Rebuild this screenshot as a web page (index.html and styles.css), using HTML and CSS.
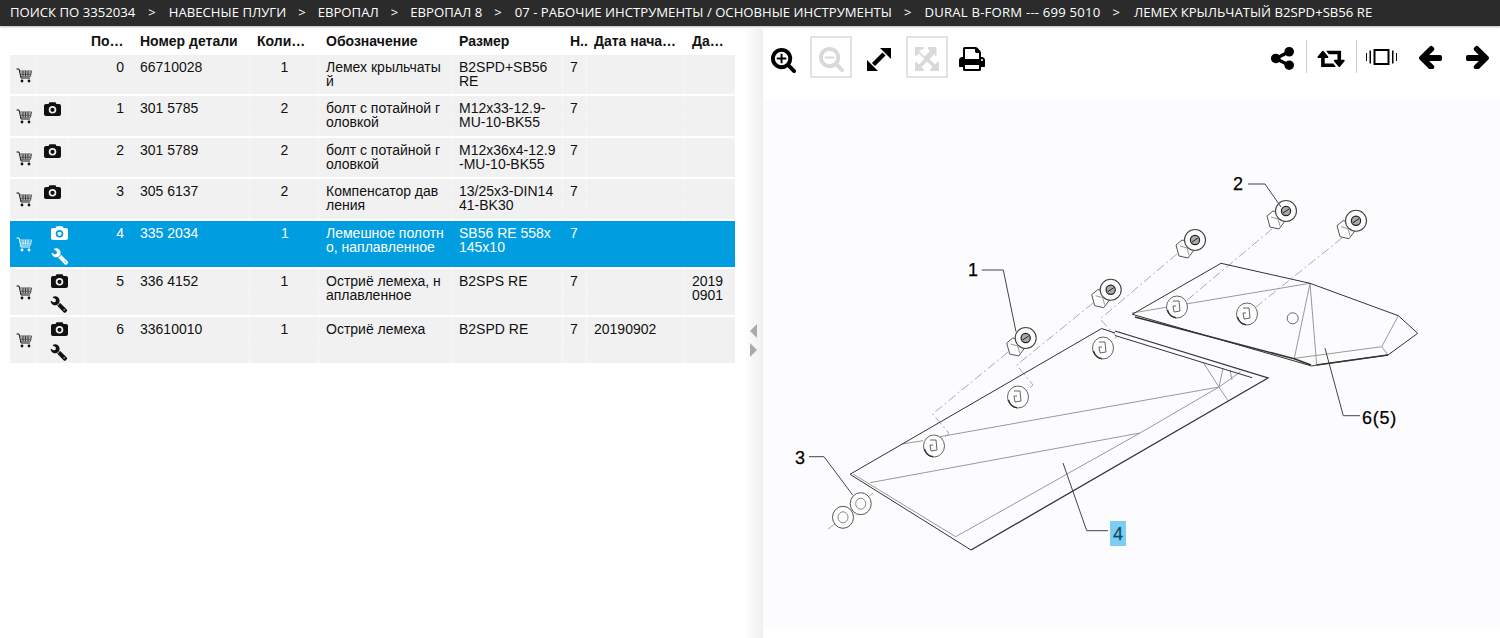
FILE: index.html
```html
<!DOCTYPE html>
<html>

<head>
    <meta charset="UTF-8" name="viewport" content="width=device-width, initial-scale=1.0">
    <title>Лемех крыльчатый</title>
    <link rel="stylesheet" href="styles.css">
</head>

<body>
    <!-- icon set -->
    <svg class="sprite">
        <symbol id="i-cart" viewBox="0 0 16 15">
            <path d="M0.5 1H3L5 10H14" fill="none" stroke="currentColor" stroke-width="1"/>
            <path d="M4 3H15.5L14.5 8.3H5M4.5 5H15M4.8 6.7H14.7M7 3V8M9.5 3V8M12 3V8" fill="none" stroke="currentColor" stroke-width="0.7"/>
            <circle cx="6" cy="13" r="1.4" fill="currentColor"/>
            <circle cx="13" cy="13" r="1.4" fill="currentColor"/>
        </symbol>
        <symbol id="i-camera" viewBox="0 0 17 14">
            <path fill-rule="evenodd" fill="currentColor" d="M2 2H4.5L5.5 0.3H11.5L12.5 2H15C16.2 2 17 2.8 17 4V12C17 13.2 16.2 14 15 14H2C0.8 14 0 13.2 0 12V4C0 2.8 0.8 2 2 2ZM8.5 4A3.8 3.8 0 1 0 8.5 11.6A3.8 3.8 0 1 0 8.5 4ZM8.5 5.7A2.1 2.1 0 1 1 8.5 9.9A2.1 2.1 0 1 1 8.5 5.7Z"/>
        </symbol>
        <symbol id="i-wrench" viewBox="0 0 1792 1792">
            <g transform="translate(1792 0) scale(-1 1)">
                <path fill="currentColor" d="M448 1472q0-26-19-45t-45-19-45 19-19 45 19 45 45 19 45-19 19-45zm644-420l-682 682q-37 37-90 37-52 0-91-37l-106-108q-38-36-38-90 0-53 38-91l681-681q39 98 114.5 173.5t173.5 114.5zm634-435q0 39-23 106-47 134-164.5 217.5t-258.5 83.5q-185 0-316.5-131.5t-131.5-316.5 131.5-316.5 316.5-131.5q58 0 121.5 16.5t107.5 46.5q16 11 16 28t-16 28l-293 169v224l193 107q5-3 79-48.5t135.5-81 70.5-35.5q15 0 23.5 10t8.5 25z"/>
            </g>
        </symbol>
        <symbol id="i-plus" viewBox="0 0 1792 1792">
            <path fill="currentColor" d="M1088 800v64q0 13-9.5 22.5t-22.5 9.5h-224v224q0 13-9.5 22.5t-22.5 9.5h-64q-13 0-22.5-9.5t-9.5-22.5v-224h-224q-13 0-22.5-9.5t-9.5-22.5v-64q0-13 9.5-22.5t22.5-9.5h224v-224q0-13 9.5-22.5t22.5-9.5h64q13 0 22.5 9.5t9.5 22.5v224h224q13 0 22.5 9.5t9.5 22.5zm128 32q0-185-131.5-316.5t-316.5-131.5-316.5 131.5-131.5 316.5 131.5 316.5 316.5 131.5 316.5-131.5 131.5-316.5zm512 832q0 53-37.5 90.5t-90.5 37.5q-54 0-90-38l-343-342q-179 124-399 124-143 0-273.5-55.5t-225-150-150-225-55.5-273.5 55.5-273.5 150-225 225-150 273.5-55.5 273.5 55.5 225 150 150 225 55.5 273.5q0 220-124 399l343 343q37 37 37 90z"/>
        </symbol>
        <symbol id="i-minus" viewBox="0 0 1792 1792">
            <path fill="currentColor" d="M1088 800v64q0 13-9.5 22.5t-22.5 9.5h-576q-13 0-22.5-9.5t-9.5-22.5v-64q0-13 9.5-22.5t22.5-9.5h576q13 0 22.5 9.5t9.5 22.5zm128 32q0-185-131.5-316.5t-316.5-131.5-316.5 131.5-131.5 316.5 131.5 316.5 316.5 131.5 316.5-131.5 131.5-316.5zm512 832q0 53-37.5 90.5t-90.5 37.5q-54 0-90-38l-343-342q-179 124-399 124-143 0-273.5-55.5t-225-150-150-225-55.5-273.5 55.5-273.5 150-225 225-150 273.5-55.5 273.5 55.5 225 150 150 225 55.5 273.5q0 220-124 399l343 343q37 37 37 90z"/>
        </symbol>
        <symbol id="i-resize" viewBox="0 0 24 23">
            <path fill="currentColor" d="M24 0V11L13 0Z"/>
            <path fill="currentColor" d="M0 23V12L11 23Z"/>
            <path d="M6.5 16.5L17 6" fill="none" stroke="currentColor" stroke-width="4.4"/>
        </symbol>
        <symbol id="i-full" viewBox="0 0 1536 1536">
            <path fill="currentColor" d="M1283 413L928 768l355 355 144-144q29-31 70-14 39 17 39 59v448q0 26-19 45t-45 19h-448q-42 0-59-40-17-39 14-69l144-144-355-355-355 355 144 144q31 30 14 69-17 40-59 40H64q-26 0-45-19t-19-45v-448q0-42 40-59 39-17 69 14l144 144 355-355-355-355-144 144q-19 19-45 19-12 0-24-5-40-17-40-59V64q0-26 19-45t45-19h448q42 0 59 40 17 39-14 69L253 253l355 355 355-355-144-144q-31-30-14-69 17-40 59-40h448q26 0 45 19t19 45v448q0 42-39 59-13 5-25 5-26 0-45-19z"/>
        </symbol>
        <symbol id="i-print" viewBox="0 0 1792 1792">
            <path fill="currentColor" d="M448 1536h896v-256h-896v256zm0-640h896v-384h-160q-40 0-68-28t-28-68v-160h-640v640zm1152 64q0-26-19-45t-45-19-45 19-19 45 19 45 45 19 45-19 19-45zm128 0v416q0 13-9.5 22.5t-22.5 9.5h-224v160q0 40-28 68t-68 28h-960q-40 0-68-28t-28-68v-160h-224q-13 0-22.5-9.5t-9.5-22.5v-416q0-79 56.5-135.5t135.5-56.5h64v-544q0-40 28-68t68-28h672q40 0 88 20t76 48l152 152q28 28 48 76t20 88v256h64q79 0 135.5 56.5t56.5 135.5z"/>
        </symbol>
        <symbol id="i-share" viewBox="0 0 1664 1664">
            <path fill="currentColor" d="M1344 1024q133 0 226.5 93.5t93.5 226.5-93.5 226.5-226.5 93.5-226.5-93.5-93.5-226.5q0-12 2-34l-360-180q-92 86-218 86-133 0-226.5-93.5t-93.5-226.5 93.5-226.5 226.5-93.5q126 0 218 86l360-180q-2-22-2-34 0-133 93.5-226.5t226.5-93.5 226.5 93.5 93.5 226.5-93.5 226.5-226.5 93.5q-126 0-218-86l-360 180q2 22 2 34t-2 34l360 180q92-86 218-86z"/>
        </symbol>
        <symbol id="i-retweet" viewBox="0 192 1920 1408">
            <path fill="currentColor" d="M1216 1504q0 13-9.5 22.5t-22.5 9.5h-960q-8 0-13.5-2t-9-7-5.5-8-3-11.5-1-11.5v-600h-192q-26 0-45-19t-19-45q0-24 15-41l320-384q19-22 49-22t49 22l320 384q15 17 15 41 0 26-19 45t-45 19h-192v384h576q16 0 25 11l160 192q7 11 7 21zm640-416q0 24-15 41l-320 384q-20 23-49 23t-49-23l-320-384q-15-17-15-41 0-26 19-45t45-19h192v-384h-576q-16 0-25-12l-160-192q-7-9-7-20 0-13 9.5-22.5t22.5-9.5h960q8 0 13.5 2t9 7 5.5 8 3 11.5 1 11.5v600h192q26 0 45 19t19 45z"/>
        </symbol>
        <symbol id="i-vibrate" viewBox="0 0 31 16">
            <rect x="8.5" y="1" width="14" height="14" fill="none" stroke="currentColor" stroke-width="2"/>
            <rect x="0" y="4" width="1" height="8" fill="currentColor"/>
            <rect x="3.5" y="1.5" width="1.5" height="13" fill="currentColor"/>
            <rect x="26" y="1.5" width="1.5" height="13" fill="currentColor"/>
            <rect x="30" y="4" width="1" height="8" fill="currentColor"/>
        </symbol>
        <symbol id="i-left" viewBox="128 128 1536 1536">
            <path fill="currentColor" d="M1664 896v128q0 53-32.5 90.5t-84.5 37.5h-704l293 294q38 36 38 90t-38 90l-75 76q-37 37-90 37-52 0-91-37l-651-652q-37-37-37-90 0-52 37-91l651-650q38-38 91-38 52 0 90 38l75 74q38 38 38 91t-38 91l-293 293h704q52 0 84.5 37.5t32.5 90.5z"/>
        </symbol>
        <symbol id="i-right" viewBox="128 128 1536 1536">
            <path fill="currentColor" d="M1600 960q0 54-37 91l-651 651q-39 37-91 37-51 0-90-37l-75-75q-38-38-38-91t38-91l293-293h-704q-52 0-84.5-37.5t-32.5-90.5v-128q0-53 32.5-90.5t84.5-37.5h704l-293-294q-38-36-38-90t38-90l75-75q38-38 90-38 53 0 91 38l651 651q37 35 37 90z"/>
        </symbol>

        <!-- drawing parts, each centred on 0,0 of its viewBox -->
        <symbol id="p-hole" viewBox="-12 -12 24 24" overflow="visible">
            <ellipse rx="10.5" ry="11" fill="#fdfdfe" stroke="#666" stroke-width="1"/>
            <path d="M-9.5 3A10.5 11 0 0 0 -1 10.7" fill="none" stroke="#333" stroke-width="1.4"/>
            <path d="M-4 -6H2L3 4L-3 5L-4 -1H-1" fill="none" stroke="#555" stroke-width="0.9"/>
        </symbol>
        <symbol id="p-bolt" viewBox="-24 -16 40 40" overflow="visible">
            <path d="M-19 5L-13 0L-4 2L-1 10L-7 18L-16 16Z" fill="#fdfdfe" stroke="#555" stroke-width="1"/>
            <path d="M-15 6L-8 8L-6 15M-8 -2L-1 9M-11 0L-4 10" fill="none" stroke="#999" stroke-width="1"/>
            <circle r="10.5" fill="#fdfdfe" stroke="#444" stroke-width="1.1"/>
            <circle r="4.6" fill="#aaa" stroke="#222" stroke-width="1.2"/>
            <path d="M-3 2L3 -2" stroke="#222" stroke-width="1"/>
        </symbol>
        <symbol id="p-washer" viewBox="-12 -12 24 24" overflow="visible">
            <ellipse rx="10.5" ry="11" fill="#fdfdfe" stroke="#555" stroke-width="1"/>
            <ellipse rx="5" ry="5.5" fill="#fdfdfe" stroke="#888" stroke-width="1"/>
        </symbol>
    </svg>

    <div class="topbar">
        <span class="crumb-first">ПОИСК ПО 3352034</span><span>&gt;</span>
        <span>НАВЕСНЫЕ ПЛУГИ</span><span>&gt;</span>
        <span>ЕВРОПАЛ</span><span>&gt;</span>
        <span>ЕВРОПАЛ 8</span><span>&gt;</span>
        <span class="crumb-shift">07 - РАБОЧИЕ ИНСТРУМЕНТЫ / ОСНОВНЫЕ ИНСТРУМЕНТЫ</span><span>&gt;</span>
        <span class="crumb-dural">DURAL B-FORM --- 699 5010</span><span>&gt;</span>
        <span class="crumb-last">ЛЕМЕХ КРЫЛЬЧАТЫЙ B2SPD+SB56 RE</span>
    </div>

    <div class="main">
        <div class="parts">
            <div class="row head">
                <div class="cell"></div>
                <div class="cell"></div>
                <div class="cell">По…</div>
                <div class="cell">Номер детали</div>
                <div class="cell">Коли…</div>
                <div class="cell">Обозначение</div>
                <div class="cell">Размер</div>
                <div class="cell">Н..</div>
                <div class="cell">Дата нача…</div>
                <div class="cell">Да…</div>
            </div>

            <div class="row item">
                <div class="cell cart"><svg class="ic-cart"><use href="#i-cart"/></svg></div>
                <div class="cell pics"></div>
                <div class="cell num">0</div>
                <div class="cell">66710028</div>
                <div class="cell qty">1</div>
                <div class="cell">Лемех крыльчатый</div>
                <div class="cell">B2SPD+SB56 RE</div>
                <div class="cell">7</div>
                <div class="cell"></div>
                <div class="cell"></div>
            </div>
            <div class="row item">
                <div class="cell cart"><svg class="ic-cart"><use href="#i-cart"/></svg></div>
                <div class="cell pics"><div class="pic-box"><svg class="ic-camera"><use href="#i-camera"/></svg></div></div>
                <div class="cell num">1</div>
                <div class="cell">301 5785</div>
                <div class="cell qty">2</div>
                <div class="cell">болт с потайной головкой</div>
                <div class="cell">M12x33-12.9-MU-10-BK55</div>
                <div class="cell">7</div>
                <div class="cell"></div>
                <div class="cell"></div>
            </div>
            <div class="row item">
                <div class="cell cart"><svg class="ic-cart"><use href="#i-cart"/></svg></div>
                <div class="cell pics"><div class="pic-box"><svg class="ic-camera"><use href="#i-camera"/></svg></div></div>
                <div class="cell num">2</div>
                <div class="cell">301 5789</div>
                <div class="cell qty">2</div>
                <div class="cell">болт с потайной головкой</div>
                <div class="cell">M12x36x4-12.9-MU-10-BK55</div>
                <div class="cell">7</div>
                <div class="cell"></div>
                <div class="cell"></div>
            </div>
            <div class="row item">
                <div class="cell cart"><svg class="ic-cart"><use href="#i-cart"/></svg></div>
                <div class="cell pics"><div class="pic-box"><svg class="ic-camera"><use href="#i-camera"/></svg></div></div>
                <div class="cell num">3</div>
                <div class="cell">305 6137</div>
                <div class="cell qty">2</div>
                <div class="cell">Компенсатор давления</div>
                <div class="cell">13/25x3-DIN1441-BK30</div>
                <div class="cell">7</div>
                <div class="cell"></div>
                <div class="cell"></div>
            </div>
            <div class="row item tall active">
                <div class="cell cart"><svg class="ic-cart"><use href="#i-cart"/></svg></div>
                <div class="cell pics"><div class="pic-box wide"><svg class="ic-camera"><use href="#i-camera"/></svg><svg class="ic-wrench"><use href="#i-wrench"/></svg></div></div>
                <div class="cell num">4</div>
                <div class="cell">335 2034</div>
                <div class="cell qty">1</div>
                <div class="cell">Лемешное полотно, наплавленное</div>
                <div class="cell">SB56 RE 558x145x10</div>
                <div class="cell">7</div>
                <div class="cell"></div>
                <div class="cell"></div>
            </div>
            <div class="row item tall">
                <div class="cell cart"><svg class="ic-cart"><use href="#i-cart"/></svg></div>
                <div class="cell pics"><div class="pic-box wide"><svg class="ic-camera"><use href="#i-camera"/></svg><svg class="ic-wrench"><use href="#i-wrench"/></svg></div></div>
                <div class="cell num">5</div>
                <div class="cell">336 4152</div>
                <div class="cell qty">1</div>
                <div class="cell">Остриё лемеха, наплавленное</div>
                <div class="cell">B2SPS RE</div>
                <div class="cell">7</div>
                <div class="cell"></div>
                <div class="cell">20190901</div>
            </div>
            <div class="row item tall">
                <div class="cell cart"><svg class="ic-cart"><use href="#i-cart"/></svg></div>
                <div class="cell pics"><div class="pic-box wide"><svg class="ic-camera"><use href="#i-camera"/></svg><svg class="ic-wrench"><use href="#i-wrench"/></svg></div></div>
                <div class="cell num">6</div>
                <div class="cell">33610010</div>
                <div class="cell qty">1</div>
                <div class="cell">Остриё лемеха</div>
                <div class="cell">B2SPD RE</div>
                <div class="cell">7</div>
                <div class="cell">20190902</div>
                <div class="cell"></div>
            </div>
        </div>

        <div class="splitter">
            <div class="arrow-left"></div>
            <div class="arrow-right"></div>
        </div>

        <div class="viewer">
            <div class="toolbar">
                <div class="tools-left">
                    <div class="tool"><svg class="ic-zoom"><use href="#i-plus"/></svg></div>
                    <div class="tool off"><svg class="ic-zoom"><use href="#i-minus"/></svg></div>
                    <div class="tool"><svg class="ic-resize"><use href="#i-resize"/></svg></div>
                    <div class="tool off"><svg class="ic-full"><use href="#i-full"/></svg></div>
                    <div class="tool print"><svg class="ic-print"><use href="#i-print"/></svg></div>
                </div>
                <div class="tools-right">
                    <div class="tool2 sep"><svg class="ic-share"><use href="#i-share"/></svg></div>
                    <div class="tool2 sep"><svg class="ic-retweet"><use href="#i-retweet"/></svg></div>
                    <div class="tool2 vib"><svg class="ic-vibrate"><use href="#i-vibrate"/></svg></div>
                    <div class="tool2"><svg class="ic-arrow"><use href="#i-left"/></svg></div>
                    <div class="tool2 last"><svg class="ic-arrow"><use href="#i-right"/></svg></div>
                </div>
            </div>

            <svg class="drawing" viewBox="763 100 737 527">
                <!-- centre lines -->
                <g class="dash">
                    <path d="M1008 352L932.7 414L949 433.3L941 440"/>
                    <path d="M1093 303L1016.7 365L1033 385L1026 391"/>
                    <path d="M1177 254L1100 319L1116.7 336.7L1110 343"/>
                    <path d="M1272 229L1186 301"/>
                    <path d="M1342 238L1256 307"/>
                    <path d="M828 529L835 524M852 510L853 509M868 497L873 493"/>
                </g>

                <!-- large blade -->
                <g class="thin">
                    <path d="M853 474L955.7 536.7L1140 433L1219 387"/>
                    <path d="M870 482.7L1140 433"/>
                    <path d="M940 436.7L1219 387"/>
                    <path d="M901.7 444L923 440.7"/>
                    <path d="M1203 362L1219 387L1228 400.7M1219 387L1223 368M1219 387L1240.7 371.7M1230 370L1232 380"/>
                </g>
                <g class="edge">
                    <path d="M971 550L850 474.3L1101.7 328.5L1115 333"/>
                    <path d="M971 550L1268 378L1115 331" stroke-width="1.3"/>
                    <path d="M1115 335.5L1252 377.7"/>
                </g>

                <!-- small blade -->
                <g class="thin">
                    <path d="M1132 313L1310 283.3L1294.3 358.3"/>
                    <path d="M1310 283.3L1316.7 365"/>
                    <path d="M1398.3 315.7L1381.7 346.7L1295 358.3"/>
                    <path d="M1381.7 346.7L1388 355"/>
                </g>
                <g class="edge">
                    <path d="M1132.3 314.3L1221 263.3L1310 283.3L1398.3 315.7L1417.7 333.3L1388 355L1316.7 365L1311.7 366L1132.3 314.3"/>
                    <path d="M1135 317L1295 359L1311 365" stroke-width="1.6"/>
                    <path d="M1316.7 365L1388 355" stroke-width="1.6"/>
                </g>
                <ellipse cx="1292.7" cy="318.3" rx="5.5" ry="5.5" class="small-hole"/>

                <!-- holes -->
                <use href="#p-hole" x="922" y="434" width="24" height="24"/>
                <use href="#p-hole" x="1006" y="385" width="24" height="24"/>
                <use href="#p-hole" x="1091" y="336" width="24" height="24"/>
                <use href="#p-hole" x="1165" y="295" width="24" height="24"/>
                <use href="#p-hole" x="1235" y="302" width="24" height="24"/>

                <!-- bolts, x/y = head centre minus 24/16 -->
                <use href="#p-bolt" x="1001.7" y="322" width="40" height="40"/>
                <use href="#p-bolt" x="1086.7" y="273.7" width="40" height="40"/>
                <use href="#p-bolt" x="1171" y="224" width="40" height="40"/>
                <use href="#p-bolt" x="1262" y="195" width="40" height="40"/>
                <use href="#p-bolt" x="1332" y="204.7" width="40" height="40"/>

                <!-- washers -->
                <use href="#p-washer" x="848.7" y="491.7" width="24" height="24"/>
                <use href="#p-washer" x="831" y="505.3" width="24" height="24"/>

                <!-- leaders -->
                <g class="leader">
                    <path d="M981.7 270H1003.3L1016 331.7"/>
                    <path d="M1248 184H1265L1281 207"/>
                    <path d="M809 456.7H824L852.7 495"/>
                    <path d="M1063 463L1086.7 530.7H1108"/>
                    <path d="M1325 348.3L1343.3 415.7H1360"/>
                </g>

                <rect x="1110" y="521" width="16" height="25" class="mark"/>
                <text x="1118" y="539.5" class="callout hit">4</text>
                <text x="973" y="275.5" class="callout">1</text>
                <text x="1238" y="189.5" class="callout">2</text>
                <text x="800" y="463.5" class="callout">3</text>
                <text x="1379.5" y="423.5" class="callout spaced">6(5)</text>
            </svg>
        </div>
    </div>
</body>

</html>
```

FILE: styles.css
```css
* {
    box-sizing: border-box;
}

body {
    margin: 0;
    height: 638px;
    overflow: hidden;
    font-family: 'Liberation Sans', Arial, sans-serif;
    font-size: 14px;
    line-height: 14px;
    color: #111;
    background-color: white;
}

.sprite {
    display: none;
}

svg {
    display: block;
}

.topbar {
    display: flex;
    gap: 12px;
    height: 26px;
    padding: 4px 10px 0;
    background-color: #2b2b2b;
    box-shadow: 0 1px 2px #bbb;
    color: white;
    font-family: 'Open Sans', sans-serif;
    font-size: 13.15px;
    line-height: 16px;
    white-space: nowrap;
}

.crumb-first {
    margin-right: 1px;
}

.crumb-first + span {
    margin-right: 1px;
}

.crumb-shift {
    margin-left: 1px;
}

.crumb-dural {
    margin-left: 1px;
    letter-spacing: 0.2px;
}

.crumb-last {
    margin-left: 2px;
}

.main {
    display: flex;
    height: 612px;
}

/* left table */
.parts {
    width: 735px;
    padding-left: 10px;
    flex: none;
}

.row {
    display: grid;
    grid-template-columns: 27px 47px 49px 117px 69px 133px 111px 24px 98px 50px;
}

.head {
    height: 29px;
    padding-top: 8px;
    font-weight: bold;
    white-space: nowrap;
}

.cell {
    padding: 5px 6px 0 7px;
}

.head .cell {
    padding-top: 0;
}

.item {
    height: 39.4px;
    margin-bottom: 2.1px;
    background-color: #f1f1f1;
}

.item.tall {
    height: 46px;
    margin-bottom: 2px;
}

.active {
    background-color: #009ee0;
    color: white;
}

.item .cell {
    word-break: break-all;
    border-right: 1px dashed #fafafa;
}

.item .pics,
.item .num,
.active .cell {
    border-right: none;
}

.item .cell:last-child {
    border-right: none;
}

.cart {
    display: flex;
    align-items: center;
    padding: 1px 0 0 6px;
}

.ic-cart {
    width: 16px;
    height: 15px;
}

.item .pics {
    padding: 0;
}

.pic-box {
    display: flex;
    flex-direction: column;
    align-items: center;
    gap: 7px;
    width: 31px;
    height: 23px;
    padding-top: 6px;
    border-right: 1px dashed #fafafa;
}

.pic-box.wide {
    width: 47px;
    height: 100%;
    padding-top: 5px;
    padding-right: 2px;
}

.active .pic-box {
    border-right: none;
}

.ic-camera {
    width: 17px;
    height: 14px;
    flex: none;
}

.ic-wrench {
    width: 18px;
    height: 18px;
    flex: none;
}

.item .num {
    padding-right: 9px;
    text-align: right;
}

.qty {
    text-align: center;
}

/* splitter */
.splitter {
    display: flex;
    flex-direction: column;
    align-items: flex-end;
    justify-content: center;
    gap: 5px;
    width: 28px;
    height: 100%;
    margin-top: 3px;
    padding: 11px 6px 0 0;
    flex: none;
    background: linear-gradient(to right, white 9px, #f0f0f0 27px, #efefef 28px);
}

.arrow-left,
.arrow-right {
    width: 0;
    height: 0;
    border-top: 7.5px solid transparent;
    border-bottom: 7.5px solid transparent;
}

.arrow-left {
    border-right: 7.5px solid #aaa;
}

.arrow-right {
    border-left: 7.5px solid #aaa;
}

/* right side */
.viewer {
    flex: 1;
    min-width: 0;
}

.toolbar {
    display: flex;
    justify-content: space-between;
    height: 74px;
    padding-top: 10px;
}

.tools-left {
    display: flex;
    gap: 6px;
    margin-left: -1px;
}

.tool {
    display: flex;
    align-items: center;
    justify-content: center;
    width: 42px;
    height: 42px;
    padding-top: 5px;
    color: black;
}

.tool.off {
    border: 2px solid #e3e3e3;
    color: #d9d9d9;
    padding-top: 3px;
}

.tool.print {
    width: 36px;
    padding-top: 3px;
}

.ic-zoom {
    width: 27px;
    height: 27px;
}

.ic-resize {
    width: 24px;
    height: 23px;
}

.ic-full {
    width: 24px;
    height: 24px;
}

.ic-print {
    width: 28px;
    height: 28px;
    flex: none;
}

.tools-right {
    display: flex;
    height: 42px;
}

.tool2 {
    display: flex;
    align-items: center;
    justify-content: center;
    width: 49px;
    height: 42px;
    color: black;
}

.tool2.sep {
    position: relative;
    width: 50px;
}

.tool2.sep::after {
    content: "";
    position: absolute;
    right: 0;
    top: 4px;
    height: 33px;
    border-right: 1px solid #ccc;
}

.tool2.vib {
    width: 48px;
}

.tool2.last {
    width: 46px;
    padding-left: 2px;
}

.ic-share {
    width: 25px;
    height: 25px;
    margin-right: 2px;
}

.ic-retweet {
    width: 30px;
    height: 20px;
    margin-top: 2px;
}

.ic-vibrate {
    width: 31px;
    height: 16px;
}

.ic-arrow {
    width: 24px;
    height: 24px;
}

/* exploded drawing */
.drawing {
    width: 737px;
    height: 527px;
    background-color: #fcfcfe;
}

.drawing path {
    fill: none;
}

.dash path {
    stroke: #aaa;
    stroke-width: 1;
    stroke-dasharray: 9 3 2 3;
}

.thin path {
    stroke: #999;
    stroke-width: 1;
}

.edge path {
    stroke: #333;
}

.leader path {
    stroke: #444;
    stroke-width: 1;
}

.small-hole {
    fill: none;
    stroke: #666;
}

.mark {
    fill: #7ccdf1;
}

.callout {
    font-size: 18px;
    text-anchor: middle;
    fill: #000;
    stroke: #000;
    stroke-width: 0.25;
}

.callout.spaced {
    letter-spacing: 0.8px;
}

.callout.hit {
    fill: #0a4a6e;
    stroke: #0a4a6e;
}
```
